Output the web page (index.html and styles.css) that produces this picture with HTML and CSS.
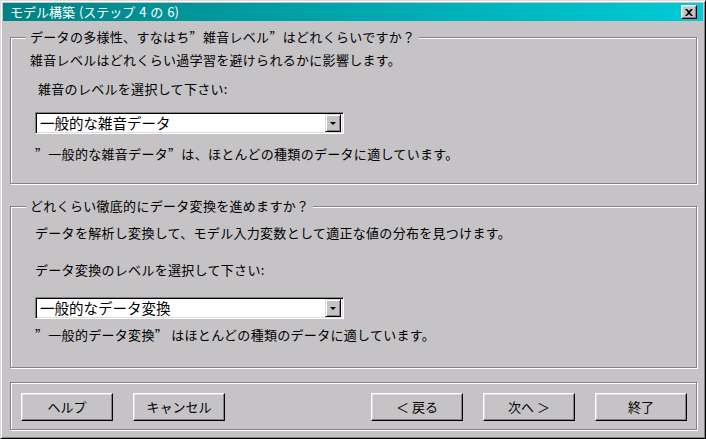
FILE: index.html
```html
<!DOCTYPE html>
<html lang="ja">
<head>
    <meta charset="UTF-8">
    <title>モデル構築</title>
    <link rel="stylesheet" href="styles.css">
</head>
<body>
    <div class="window">
        <div class="titlebar">
            <span class="title">モデル構築 (ステップ 4 の 6)</span>
            <div class="close">
                <svg width="8" height="7" viewBox="0 0 8 7"><path d="M0 0h2l2 2 2-2h2L5 3.5 8 7H6L4 5 2 7H0l3-3.5z" fill="#000"/></svg>
            </div>
        </div>

        <div class="content">
            <fieldset class="group group-noise">
                <legend>データの多様性、すなはち<span class="q">”</span>雑音レベル<span class="q">”</span>はどれくらいですか？</legend>
                <p class="desc">雑音レベルはどれくらい過学習を避けられるかに影響します。</p>
                <p class="prompt">雑音のレベルを選択して下さい:</p>
                <div class="combo">
                    <span class="combo-text">一般的な雑音データ</span>
                    <span class="combo-btn"><i class="arrow"></i></span>
                </div>
                <p class="note"><span class="q">”</span>一般的な雑音データ<span class="q">”</span>は、ほとんどの種類のデータに適しています。</p>
            </fieldset>

            <fieldset class="group group-transform">
                <legend>どれくらい徹底的にデータ変換を進めますか？</legend>
                <p class="desc">データを解析し変換して、モデル入力変数として適正な値の分布を見つけます。</p>
                <p class="prompt">データ変換のレベルを選択して下さい:</p>
                <div class="combo">
                    <span class="combo-text">一般的なデータ変換</span>
                    <span class="combo-btn"><i class="arrow"></i></span>
                </div>
                <p class="note"><span class="q">”</span>一般的データ変換<span class="q">”</span> はほとんどの種類のデータに適しています。</p>
            </fieldset>

            <div class="buttons">
                <button class="btn">ヘルプ</button>
                <button class="btn">キャンセル</button>
                <span class="spacer"></span>
                <button class="btn">＜ 戻る</button>
                <button class="btn">次へ ＞</button>
                <button class="btn">終了</button>
            </div>
        </div>
    </div>
</body>
</html>
```

FILE: styles.css
```css
* { box-sizing: border-box; }
body {
    margin: 0;
    background: #c6c3c6;
    font-family: "Noto Sans CJK JP", sans-serif;
    font-size: 13px;
    line-height: 16px;
    color: #000;
}
.window {
    width: 706px;
    height: 439px;
    border: 1px solid;
    border-color: #dedbde #000 #000 #dedbde;
    box-shadow: inset 1px 1px #fff, inset -1px -1px #848284;
    padding: 2px;
}
.titlebar {
    height: 18px;
    background: linear-gradient(to right, #008284, #00cbd6);
    color: #fff;
    display: flex;
    align-items: center;
    justify-content: space-between;
    padding: 0 6px 0 7px;
}
.title { word-spacing: 1px; }
.close {
    width: 16px;
    height: 14px;
    background: #c6c3c6;
    border: 1px solid;
    border-color: #fff #000 #000 #fff;
    box-shadow: inset -1px -1px #848284, inset 1px 1px #dedbde;
    display: flex;
    align-items: center;
    justify-content: center;
}
.close svg { display: block; }
.content { padding: 0 6px 0 7px; }

/* etched group frames */
.group {
    margin: 0;
    min-width: 0;
    border: 1px solid #848284;
    box-shadow: inset 1px 1px #fff, 1px 1px #fff;
    letter-spacing: 0.3px;
}
.group legend {
    margin-left: 15px;
    padding: 0 4px;
    background: #c6c3c6;
}
.group p { margin: 0; }
.q { font-feature-settings: "fwid"; }
.group-noise { margin-top: 8px; padding: 7px 0 21px; }
.group-noise .desc { margin-left: 19px; }
.group-noise .prompt { margin: 13px 0 0 27px; }
.group-noise .combo { margin-top: 15px; }
.group-noise .note { margin-top: 12px; }
.group-transform { margin-top: 14px; padding: 11px 0 24px; }
.group-transform .desc { margin-left: 24px; }
.group-transform .prompt { margin: 21px 0 0 24px; }
.group-transform .combo { margin-top: 19px; }
.group-transform .note { margin-top: 8px; }
.group .note { margin-left: 24px; }

.combo {
    width: 309px;
    height: 22px;
    margin-left: 24px;
    background: #fff;
    border: 1px solid;
    border-color: #848284 #fff #fff #848284;
    box-shadow: inset 1px 1px #000, inset -1px -1px #dedbde;
    display: flex;
    align-items: center;
    padding: 2px;
}
.combo-text { flex: 1; padding-left: 2px; font-size: 14.5px; letter-spacing: 0; }
.combo-btn {
    width: 16px;
    height: 18px;
    background: #c6c3c6;
    border: 1px solid;
    border-color: #dedbde #000 #000 #dedbde;
    box-shadow: inset 1px 1px #fff, inset -1px -1px #848284;
    display: flex;
    align-items: center;
    justify-content: center;
}
.arrow {
    border-left: 3px solid transparent;
    border-right: 3px solid transparent;
    border-top: 3px solid #000;
}

.buttons {
    margin-top: 14px;
    border: 1px solid #848284;
    box-shadow: inset 1px 1px #fff, 1px 1px #fff;
    padding: 10px 9px 8px 10px;
    display: flex;
    gap: 20px;
}
.spacer { flex: 1; }
.btn {
    width: 92px;
    height: 28px;
    padding: 0;
    font: inherit;
    color: #000;
    background: #c6c3c6;
    border: 1px solid;
    border-color: #fff #000 #000 #fff;
    box-shadow: inset -1px -1px #848284, inset 1px 1px #dedbde;
}
```
